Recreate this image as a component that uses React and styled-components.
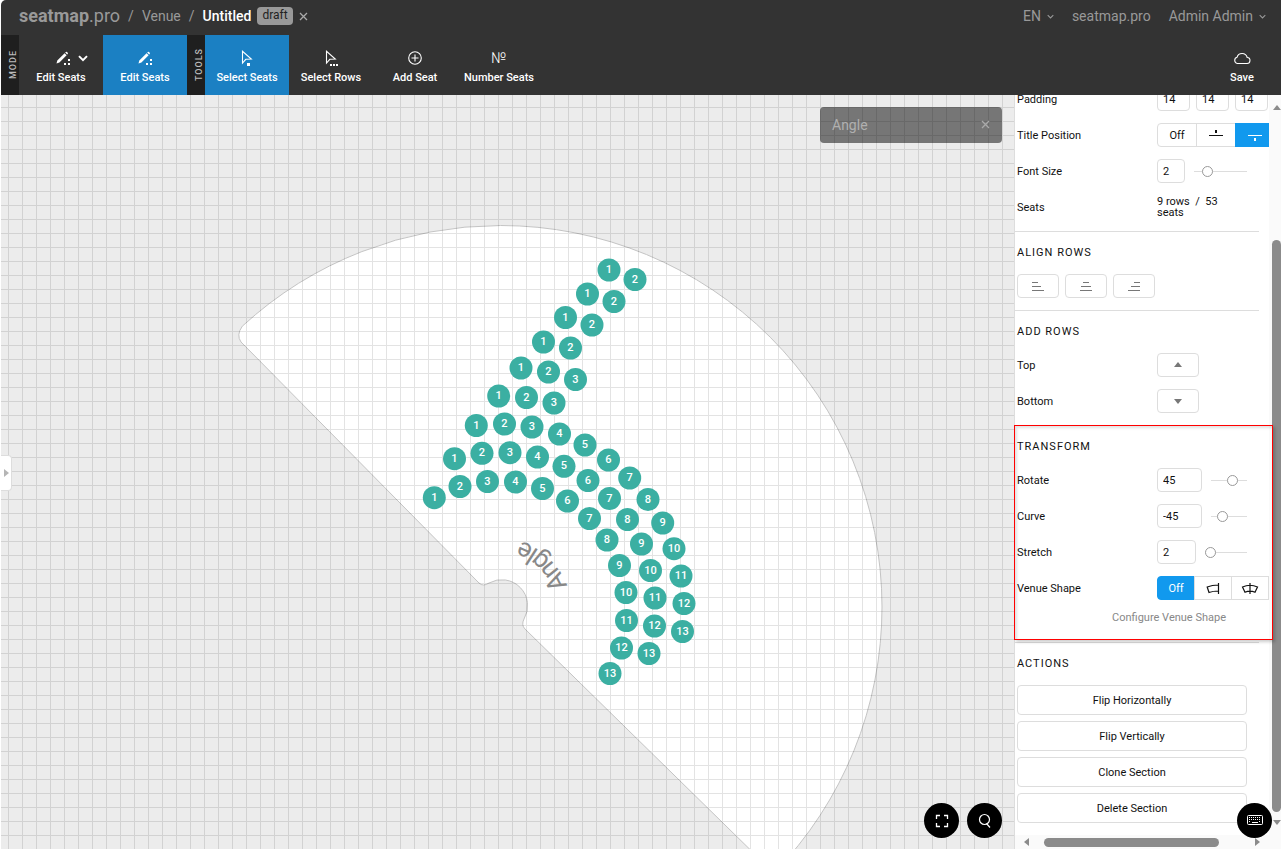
import React, { useState } from "react";
import styled, { createGlobalStyle, css } from "styled-components";

const GlobalStyle = createGlobalStyle`
  * {
    box-sizing: border-box;
  }
  body {
    margin: 0;
    background-color: #fff;
    color: #111;
    font-family: Roboto, "Liberation Sans", sans-serif;
    font-size: 11px;
  }
  button, input {
    font: inherit;
    color: inherit;
    margin: 0;
  }
  button {
    padding: 0;
    cursor: pointer;
  }
`;

const Page = styled.div`
  height: 100vh;
  padding-left: 1px;
  display: flex;
  flex-direction: column;
  overflow: hidden;
`;

/* header */

const Header = styled.header`
  height: 35px;
  flex: none;
  padding: 0 15px 3px 18px;
  display: flex;
  align-items: center;
  justify-content: space-between;
  background-color: #333;
  color: #999;
  font-size: 14px;
  border-radius: 5px 0 0 0;
`;

const Crumbs = styled.nav`
  display: flex;
  align-items: center;
  gap: 8px;
`;

const HeaderLink = styled.a`
  display: flex;
  align-items: center;
  gap: 6px;
  color: #999;
  text-decoration: none;
`;

const Brand = styled.a`
  color: #999;
  font-size: 18px;
  line-height: 20px;
  text-decoration: none;
`;

const Current = styled.span`
  display: flex;
  align-items: center;
  gap: 6px;
  color: #fff;
  font-weight: 500;
`;

const Badge = styled.span`
  height: 18px;
  padding: 0 5px;
  line-height: 17px;
  border-radius: 4px;
  background-color: #999;
  color: #222;
  font-size: 12px;
  font-weight: 400;
`;

const IconButton = styled.button`
  display: flex;
  border: none;
  background: none;
  color: #aaa;
`;

const UserMenu = styled.div`
  display: flex;
  gap: 18px;
`;

/* toolbar */

const Toolbar = styled.div`
  height: 60px;
  flex: none;
  display: flex;
  background-color: #333;
`;

const Strip = styled.div`
  width: 18px;
  padding-left: 5px;
  display: flex;
  align-items: center;
  justify-content: center;
  background-color: #1f1f1f;
  color: #bbb;
  span {
    writing-mode: vertical-rl;
    transform: rotate(180deg);
    font-size: 9px;
    font-weight: 500;
    letter-spacing: 1px;
  }
`;

const Tool = styled.button`
  width: ${({ $narrow }) => ($narrow ? "78px" : "84px")};
  padding-top: 12px;
  display: flex;
  flex-direction: column;
  align-items: center;
  gap: 1px;
  border: none;
  background-color: ${({ $active }) => ($active ? "#1b80c3" : "transparent")};
  color: #fff;
  font-weight: 500;
  line-height: 16px;
`;

const ToolIcon = styled.span`
  height: 22px;
  padding-left: ${({ $split }) => ($split ? "22px" : "0")};
  display: flex;
  align-items: center;
  gap: 8px;
  font-size: 15px;
  font-weight: 300;
`;

const Spacer = styled.div`
  flex: 1;
`;

/* canvas */

const Main = styled.main`
  flex: 1;
  min-height: 0;
  display: flex;
`;

const Stage = styled.section`
  position: relative;
  flex: 1;
  min-width: 0;
  overflow: hidden;
  background-color: #ececec;
`;

const Drawing = styled.svg`
  display: block;
  width: 100%;
  height: 100%;
`;

const SectionTag = styled.div`
  position: absolute;
  top: 12px;
  right: 12px;
  width: 182px;
  height: 36px;
  padding: 0 12px 1px;
  display: flex;
  align-items: center;
  justify-content: space-between;
  border-radius: 4px;
  background-color: rgba(0, 0, 0, 0.5);
  color: #b0b0b0;
  font-size: 14px;
`;

const Drawer = styled.button`
  position: absolute;
  left: 0;
  top: 360px;
  width: 11px;
  height: 36px;
  display: flex;
  align-items: center;
  justify-content: center;
  border: 1px solid #ddd;
  border-left: none;
  border-radius: 0 4px 4px 0;
  background-color: #fff;
  color: #b5b5b5;
`;

const Floating = styled.div`
  position: absolute;
  right: ${({ $right }) => $right}px;
  bottom: 11px;
  z-index: 3;
  display: flex;
  gap: 8px;
`;

const RoundButton = styled.button`
  width: 35px;
  height: 35px;
  display: flex;
  align-items: center;
  justify-content: center;
  border: none;
  border-radius: 50%;
  background-color: #000;
  color: #fff;
`;

/* side panel */

const Panel = styled.aside`
  position: relative;
  width: 267px;
  flex: none;
  display: grid;
  grid-template-columns: 1fr 12px;
  grid-template-rows: 1fr 14px;
  overflow: hidden;
  background-color: #fff;
`;

const Content = styled.div`
  min-width: 0;
  min-height: 0;
  padding: 0 10px 12px 0;
  display: flex;
  flex-direction: column;
  justify-content: flex-end;
  border-left: 1px solid #ddd;
`;

const Section = styled.section`
  position: relative;
  flex: none;
  padding: 0 12px 6px 2px;
  & + & {
    border-top: 1px solid #ddd;
  }
`;

const SectionTitle = styled.h2`
  margin: 0;
  padding: 13px 0 7px;
  font-size: 11px;
  font-weight: 400;
  line-height: 16px;
  letter-spacing: 1px;
  text-transform: uppercase;
`;

const Row = styled.div`
  height: 36px;
  display: flex;
  align-items: center;
`;

const Label = styled.label`
  width: 140px;
  flex: none;
`;

const Summary = styled.span`
  line-height: 11px;
`;

const Field = styled.div`
  flex: 1;
  min-width: 0;
  display: flex;
  align-items: center;
  gap: ${({ $gap }) => $gap || 6}px;
`;

const outline = css`
  border: 1px solid #ddd;
  border-radius: 4px;
  background-color: #fff;
`;

const NumberInput = styled.input`
  ${outline}
  width: ${({ $width }) => $width}px;
  height: 24px;
  flex: none;
  padding: 0 5px;
`;

const Range = styled.input`
  appearance: none;
  flex: 1;
  min-width: 0;
  height: 11px;
  background: linear-gradient(#ddd, #ddd) center / 100% 1px no-repeat;
  &::-webkit-slider-thumb {
    appearance: none;
    width: 11px;
    height: 11px;
    border: 1px solid #999;
    border-radius: 50%;
    background-color: #fff;
  }
`;

const Segments = styled.div`
  display: flex;
`;

const Segment = styled.button`
  width: ${({ $width }) => $width}px;
  height: 24px;
  flex: none;
  display: flex;
  align-items: center;
  justify-content: center;
  border: 1px solid ${({ $on }) => ($on ? "#1199ee" : "#ddd")};
  background-color: ${({ $on }) => ($on ? "#1199ee" : "#fff")};
  color: ${({ $on }) => ($on ? "#fff" : "#111")};
  & + & {
    margin-left: -1px;
  }
  &:first-child {
    border-radius: 4px 0 0 4px;
  }
`;

const SmallButton = styled.button`
  ${outline}
  width: 42px;
  height: 24px;
  display: flex;
  align-items: center;
  justify-content: center;
  color: #777;
`;

const Configure = styled.a`
  display: block;
  height: 30px;
  padding-right: 21px;
  line-height: 24px;
  text-align: right;
  text-decoration: none;
  color: #888;
`;

const Actions = styled.div`
  padding-top: 6px;
  display: flex;
  flex-direction: column;
  gap: 6px;
`;

const ActionSection = styled(Section)`
  padding-bottom: 0;
`;

const ActionButton = styled.button`
  ${outline}
  height: 30px;
`;

const Highlight = styled.div`
  position: absolute;
  inset: -1px -14px 2px -1px;
  z-index: 2;
  border: 1px solid #f00;
  box-shadow: 2px 2px 3px rgba(0, 0, 0, 0.2), inset 2px 2px 3px rgba(0, 0, 0, 0.12);
  pointer-events: none;
`;

const VerticalRail = styled.div`
  z-index: 1;
  padding: 9px 0 9px 3px;
  display: flex;
  flex-direction: column;
  align-items: center;
  background-color: #fafafa;
  color: #8b8b8b;
`;

const VerticalThumb = styled.div`
  width: 9px;
  flex: 1;
  margin: 128px 0 6px;
  border-radius: 5px;
  background-color: #8b8b8b;
`;

const HorizontalRail = styled.div`
  grid-column: 1 / -1;
  z-index: 1;
  padding: 0 20px 0 8px;
  display: flex;
  align-items: center;
  border-left: 1px solid #ddd;
  background-color: #fafafa;
  color: #8b8b8b;
`;

const HorizontalThumb = styled.div`
  height: 9px;
  flex: 1;
  margin: 0 34px 0 13px;
  border-radius: 5px;
  background-color: #8b8b8b;
`;

/* icons */

const Close = () => (
  <svg width="9" height="9" viewBox="0 0 9 9" fill="none" stroke="currentColor" strokeWidth="1.3">
    <path d="M1 1l7 7M8 1L1 8" />
  </svg>
);

const Chevron = ({ size = 7, weight = 1.2 }) => (
  <svg width={size} height={size} viewBox="0 0 8 8" fill="none" stroke="currentColor" strokeWidth={weight}>
    <path d="M0.8 2.5L4 5.7l3.2-3.2" />
  </svg>
);

const Pencil = () => (
  <svg width="14" height="14" viewBox="0 0 14 14" fill="currentColor">
    <path d="M0.5 12.5l0.8-3L8.6 2.2l2 2L3.4 11.5zM9.2 1.6l0.6-0.6q0.6-0.5 1.2 0l0.7 0.7q0.5 0.6 0 1.2l-0.6 0.6z" />
    <path d="M12 8h2v2h-2zM8 12h2v2H8zM12 12h2v2h-2z" />
  </svg>
);

const Cursor = ({ rows }) => (
  <svg width="14" height="16" viewBox="0 0 14 16" fill="none" stroke="currentColor" strokeWidth="1.1">
    <path d="M2.500 1.300v11.700l3.300-3.700 5.500-0.300z" />
    {rows ? (
      <path d="M6 14h2v2H6zM9 14h2v2H9zM12 14h2v2h-2z" fill="currentColor" stroke="none" />
    ) : (
      <path d="M7 13h3v3h-3z" fill="currentColor" stroke="none" />
    )}
  </svg>
);

const Plus = () => (
  <svg width="14" height="14" viewBox="0 0 14 14" fill="none" stroke="currentColor" strokeWidth="1.1">
    <circle cx="7" cy="7" r="6.300" />
    <path d="M7 3.500v7M3.500 7h7" />
  </svg>
);

const Cloud = () => (
  <svg width="18" height="14" viewBox="0 0 18 14" fill="none" stroke="currentColor" strokeWidth="1.1">
    <path d="M4.300 12.500h9.400a3 3 0 0 0 0.500-6A5.300 5.300 0 0 0 4 6.300a3.200 3.200 0 0 0 0.300 6.200z" />
  </svg>
);

const Triangle = ({ dir = "up" }) => {
  const shapes = {
    up: "M0 6L4 1l4 5z",
    down: "M0 2h8L4 7z",
    left: "M6 0v8L1 4z",
    right: "M2 0v8l5-4z",
  };
  return (
    <svg width="8" height="8" viewBox="0 0 8 8" fill="currentColor">
      <path d={shapes[dir]} />
    </svg>
  );
};

const TitleLine = ({ below }) => (
  <svg width="14" height="12" viewBox="0 0 14 12" fill="currentColor">
    <path d={below ? "M0 6h14v1H0zM6 9h2v3H6z" : "M0 6h14v1H0zM6 1h2v3H6z"} />
  </svg>
);

const AlignLines = ({ align }) => {
  const starts = { left: [0, 0, 0], center: [3, 1, 0], right: [6, 3, 0] }[align];
  return (
    <svg width="12" height="10" viewBox="0 0 12 10" fill="currentColor">
      <rect x={starts[0]} y="1" width="6" height="1" />
      <rect x={starts[1]} y="5" width={align === "center" ? 10 : 9} height="1" />
      <rect x={starts[2]} y="9" width="12" height="1" />
    </svg>
  );
};

const ShapeSide = () => (
  <svg width="14" height="13" viewBox="0 0 14 13" fill="none" stroke="currentColor" strokeWidth="1.200">
    <path d="M12.500 1v11M12.500 3Q6 3 1.200 5L3 10.500Q7 9 12.500 9" />
  </svg>
);

const ShapeCenter = () => (
  <svg width="18" height="13" viewBox="0 0 18 13" fill="none" stroke="currentColor" strokeWidth="1.200">
    <path d="M9 1v11M1.500 5Q9 1.500 16.500 5L14 10.200Q9 8 4 10.200z" />
  </svg>
);

const Expand = () => (
  <svg width="14" height="14" viewBox="0 0 14 14" fill="none" stroke="currentColor" strokeWidth="1.300">
    <path d="M1.500 5V1.500H5M9 1.500h3.500V5M12.500 9v3.500H9M5 12.500H1.500V9" />
  </svg>
);

const Search = () => (
  <svg width="14" height="16" viewBox="0 0 14 16" fill="none" stroke="currentColor" strokeWidth="1.200">
    <circle cx="6.500" cy="6.500" r="5" />
    <path d="M8.500 10.500l3.500 4" />
  </svg>
);

const Keyboard = () => (
  <svg width="16" height="11" viewBox="0 0 16 11" fill="none" stroke="currentColor">
    <rect x="0.500" y="0.500" width="15" height="9" rx="1" />
    <path d="M2 2.500h12M2 4.500h12M2 6.500h2M12 6.500h2" strokeDasharray="1 1" />
    <path d="M5 7.500h6" />
  </svg>
);

/* [x, y] of each seat, row by row */
const rows = [
  [[609, 175], [635, 184.500]],
  [[587.500, 199], [614, 206.500]],
  [[565.500, 222.500], [592, 230]],
  [[543.500, 247], [570.500, 253]],
  [[521, 273], [548.500, 277], [575.500, 284.500]],
  [[498.700, 301], [526.500, 302.500], [554, 308]],
  [[476.300, 330.500], [504.500, 329], [532, 332], [559.500, 339], [585, 350], [608.500, 365], [629.700, 383], [648, 404.500], [662.700, 428], [674, 453.700], [681, 481], [684, 508.500], [682.500, 536.500]],
  [[454.500, 363.700], [482, 358.300], [510, 357.700], [537.500, 362], [564, 371.300], [588, 385.500], [609.500, 403.500], [627.500, 424.500], [641.500, 449], [650.500, 475.500], [655, 503], [654.500, 531], [649, 558.500]],
  [[434.300, 402.700], [460, 391.500], [487.500, 386.500], [515.500, 387], [542.500, 393.500], [567.500, 406], [589.500, 423.500], [607, 445], [619.500, 470.500], [626, 497.500], [626.500, 525.500], [621.500, 553], [610, 578.500]],
];

const SeatMap = () => (
  <Drawing aria-label="Seating section">
    <defs>
      <pattern id="grid" x="7" y="12" width="14" height="14" patternUnits="userSpaceOnUse">
        <path d="M0 0h14v1H1v13H0z" fill="#000" fillOpacity="0.11" />
      </pattern>
      <path id="caption" d="M567 491A76 76 0 0 0 487 442" />
    </defs>
    <g transform="translate(-1 0)">
      <path
        d="M242.300 231.200A381.500 381.500 0 0 1 500.500 130.500A381.500 381.500 0 0 1 882 512A381.500 381.500 0 0 1 774 778L525 534Q521 530 524 524A26 26 0 0 0 489 488Q483 492 479 488L241 247Q236 240 242.300 231.200Z"
        fill="#fff"
        stroke="#c4c4c4"
      />
    </g>
    <rect width="100%" height="100%" fill="url(#grid)" />
    <g transform="translate(-1 0)">
      <text fill="#888" fontSize="26">
        <textPath href="#caption">Angle</textPath>
      </text>
      {rows.map((row, r) =>
        row.map(([x, y], i) => (
          <g key={`${r}-${i}`}>
            <circle cx={x} cy={y} r="11.500" fill="#3bafa2" />
            <text x={x} y={y + 3} fill="#fff" fontSize="11" fontWeight="500" textAnchor="middle">
              {i + 1}
            </text>
          </g>
        ))
      )}
    </g>
  </Drawing>
);

const SliderRow = ({ id, label, initial, width, min, max }) => {
  const [value, setValue] = useState(initial);
  const change = (e) => setValue(e.target.value);
  return (
    <Row>
      <Label htmlFor={id}>{label}</Label>
      <Field $gap={9}>
        <NumberInput id={id} $width={width} value={value} onChange={change} />
        <Range type="range" aria-label={label} min={min} max={max} value={value} onChange={change} />
      </Field>
    </Row>
  );
};

const App = () => {
  return (
    <Page>
      <GlobalStyle />
      <Header>
        <Crumbs>
          <Brand href="#"><b>seatmap</b>.pro</Brand>
          <span>/</span>
          <HeaderLink href="#">Venue</HeaderLink>
          <span>/</span>
          <Current>
            Untitled
            <Badge>draft</Badge>
            <IconButton aria-label="Close"><Close /></IconButton>
          </Current>
        </Crumbs>
        <UserMenu>
          <HeaderLink href="#">EN <Chevron /></HeaderLink>
          <HeaderLink href="#">seatmap.pro</HeaderLink>
          <HeaderLink href="#">Admin Admin <Chevron /></HeaderLink>
        </UserMenu>
      </Header>
      <Toolbar>
        <Strip><span>MODE</span></Strip>
        <Tool>
          <ToolIcon $split><Pencil /><Chevron size={10} weight={1.6} /></ToolIcon>
          Edit Seats
        </Tool>
        <Tool $active>
          <ToolIcon><Pencil /></ToolIcon>
          Edit Seats
        </Tool>
        <Strip><span>TOOLS</span></Strip>
        <Tool $active>
          <ToolIcon><Cursor /></ToolIcon>
          Select Seats
        </Tool>
        <Tool>
          <ToolIcon><Cursor rows /></ToolIcon>
          Select Rows
        </Tool>
        <Tool>
          <ToolIcon><Plus /></ToolIcon>
          Add Seat
        </Tool>
        <Tool>
          <ToolIcon>№</ToolIcon>
          Number Seats
        </Tool>
        <Spacer />
        <Tool $narrow>
          <ToolIcon><Cloud /></ToolIcon>
          Save
        </Tool>
      </Toolbar>
      <Main>
        <Stage>
          <SeatMap />
          <SectionTag>
            Angle
            <IconButton aria-label="Deselect"><Close /></IconButton>
          </SectionTag>
          <Drawer aria-label="Open drawer"><Triangle dir="right" /></Drawer>
          <Floating $right={12}>
            <RoundButton aria-label="Fit to screen"><Expand /></RoundButton>
            <RoundButton aria-label="Search"><Search /></RoundButton>
          </Floating>
        </Stage>
        <Panel>
          <Content>
            <Section>
              <Row>
                <Label htmlFor="padding">Padding</Label>
                <Field>
                  <NumberInput id="padding" $width={33} defaultValue="14" />
                  <NumberInput aria-label="Padding middle" $width={33} defaultValue="14" />
                  <NumberInput aria-label="Padding right" $width={33} defaultValue="14" />
                </Field>
              </Row>
              <Row>
                <Label as="span">Title Position</Label>
                <Segments>
                  <Segment $width={40}>Off</Segment>
                  <Segment $width={40} aria-label="Above"><TitleLine /></Segment>
                  <Segment $width={40} $on aria-label="Below"><TitleLine below /></Segment>
                </Segments>
              </Row>
              <SliderRow id="font-size" label="Font Size" initial={2} width={28} min={0} max={11} />
              <Row>
                <Label as="span">Seats</Label>
                <Summary>9 rows &nbsp;/&nbsp; 53 seats</Summary>
              </Row>
            </Section>
            <Section>
              <SectionTitle>Align rows</SectionTitle>
              <Row>
                <Field>
                  <SmallButton aria-label="Align left"><AlignLines align="left" /></SmallButton>
                  <SmallButton aria-label="Align center"><AlignLines align="center" /></SmallButton>
                  <SmallButton aria-label="Align right"><AlignLines align="right" /></SmallButton>
                </Field>
              </Row>
            </Section>
            <Section>
              <SectionTitle>Add rows</SectionTitle>
              <Row>
                <Label htmlFor="add-top">Top</Label>
                <SmallButton id="add-top"><Triangle /></SmallButton>
              </Row>
              <Row>
                <Label htmlFor="add-bottom">Bottom</Label>
                <SmallButton id="add-bottom"><Triangle dir="down" /></SmallButton>
              </Row>
            </Section>
            <Section>
              <SectionTitle>Transform</SectionTitle>
              <SliderRow id="rotate" label="Rotate" initial={45} width={45} min={-180} max={180} />
              <SliderRow id="curve" label="Curve" initial={-45} width={45} min={-90} max={90} />
              <SliderRow id="stretch" label="Stretch" initial={2} width={39} min={2} max={10} />
              <Row>
                <Label as="span">Venue Shape</Label>
                <Segments>
                  <Segment $width={38} $on>Off</Segment>
                  <Segment $width={38} aria-label="Side"><ShapeSide /></Segment>
                  <Segment $width={38} aria-label="Center"><ShapeCenter /></Segment>
                </Segments>
              </Row>
              <Configure href="#">Configure Venue Shape</Configure>
              <Highlight />
            </Section>
            <ActionSection>
              <SectionTitle>Actions</SectionTitle>
              <Actions>
                <ActionButton>Flip Horizontally</ActionButton>
                <ActionButton>Flip Vertically</ActionButton>
                <ActionButton>Clone Section</ActionButton>
                <ActionButton>Delete Section</ActionButton>
              </Actions>
            </ActionSection>
          </Content>
          <VerticalRail>
            <Triangle />
            <VerticalThumb />
            <Triangle dir="down" />
          </VerticalRail>
          <HorizontalRail>
            <Triangle dir="left" />
            <HorizontalThumb />
            <Triangle dir="right" />
          </HorizontalRail>
          <Floating $right={9}>
            <RoundButton aria-label="Keyboard shortcuts"><Keyboard /></RoundButton>
          </Floating>
        </Panel>
      </Main>
    </Page>
  );
};

export default App;
